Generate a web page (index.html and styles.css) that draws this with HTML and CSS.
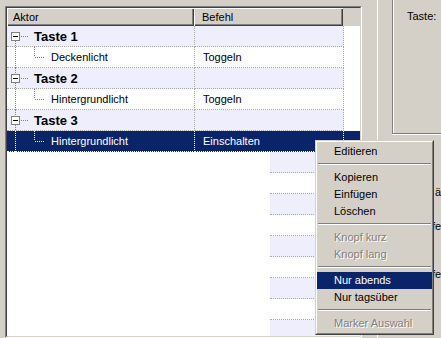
FILE: index.html
```html
<!DOCTYPE html>
<html lang="de">

<head>
    <meta charset="UTF-8">
    <meta name="viewport" content="width=device-width, initial-scale=1.0">
    <link rel="stylesheet" href="styles.css">
    <title>Aktor Liste</title>
</head>

<body>
    <div class="window">

        <div class="list">
            <div class="list-in">

                <div class="header">
                    <div class="hcell h1">Aktor</div>
                    <div class="hcell h2">Befehl</div>
                    <div class="hfill"></div>
                </div>

                <div class="row root">
                    <div class="cell c1">
                        <svg class="tree" width="27" height="20">
                            <path class="dot" d="M8.5 15V21"/>
                            <path class="dot" d="M14 10.5h8"/>
                            <rect x="4.5" y="6.5" width="8" height="8" fill="#fff" stroke="#808080"/>
                            <path d="M6 10.5h5" stroke="#000"/>
                        </svg>
                        <span class="key">Taste 1</span>
                    </div>
                    <div class="cell c2"></div>
                    <div class="cell fill"></div>
                </div>

                <div class="row">
                    <div class="cell c1">
                        <svg class="tree" width="44" height="20">
                            <path class="dot" d="M8.5 0V21"/>
                            <path class="dot" d="M27.5 0V10M28 10.5h9"/>
                        </svg>
                        <span>Deckenlicht</span>
                    </div>
                    <div class="cell c2">Toggeln</div>
                    <div class="cell fill"></div>
                </div>

                <div class="row root">
                    <div class="cell c1">
                        <svg class="tree" width="27" height="20">
                            <path class="dot" d="M8.5 0V6M8.5 15V21"/>
                            <path class="dot" d="M14 10.5h8"/>
                            <rect x="4.5" y="6.5" width="8" height="8" fill="#fff" stroke="#808080"/>
                            <path d="M6 10.5h5" stroke="#000"/>
                        </svg>
                        <span class="key">Taste 2</span>
                    </div>
                    <div class="cell c2"></div>
                    <div class="cell fill"></div>
                </div>

                <div class="row">
                    <div class="cell c1">
                        <svg class="tree" width="44" height="20">
                            <path class="dot" d="M8.5 0V21"/>
                            <path class="dot" d="M27.5 0V10M28 10.5h9"/>
                        </svg>
                        <span>Hintergrundlicht</span>
                    </div>
                    <div class="cell c2">Toggeln</div>
                    <div class="cell fill"></div>
                </div>

                <div class="row root">
                    <div class="cell c1">
                        <svg class="tree" width="27" height="20">
                            <path class="dot" d="M8.5 0V6M8.5 15V21"/>
                            <path class="dot" d="M14 10.5h8"/>
                            <rect x="4.5" y="6.5" width="8" height="8" fill="#fff" stroke="#808080"/>
                            <path d="M6 10.5h5" stroke="#000"/>
                        </svg>
                        <span class="key">Taste 3</span>
                    </div>
                    <div class="cell c2"></div>
                    <div class="cell fill"></div>
                </div>

                <div class="row sel">
                    <div class="cell c1">
                        <svg class="tree" width="44" height="20">
                            <path class="dot" d="M8.5 0V21"/>
                            <path class="dot" d="M27.5 0V10M28 10.5h9"/>
                        </svg>
                        <span>Hintergrundlicht</span>
                    </div>
                    <div class="cell c2">Einschalten</div>
                    <div class="cell fill"></div>
                </div>

                <!-- leftover rows that were not repainted -->
                <div class="ghost">
                    <div class="blank">
                        <div class="blank-top"></div>
                    </div>
                    <div class="stripes">
                        <div class="stripe"></div>
                        <div class="stripe"></div>
                        <div class="stripe"></div>
                        <div class="stripe"></div>
                        <div class="stripe"></div>
                        <div class="stripe"></div>
                        <div class="stripe"></div>
                        <div class="stripe"></div>
                        <div class="stripe"></div>
                    </div>
                </div>

            </div>
        </div>

        <div class="gap"></div>

        <div class="panel">
            <div class="group">
                <div class="group-label">Taste:</div>
            </div>
            <div class="label l1">ä</div>
            <div class="label l2">fe</div>
            <div class="label l3">fe</div>
        </div>

    </div>

    <div class="menu">
        <div class="menu-in">
            <div class="item">Editieren</div>
            <div class="sep"></div>
            <div class="item">Kopieren</div>
            <div class="item">Einfügen</div>
            <div class="item">Löschen</div>
            <div class="sep"></div>
            <div class="item off">Knopf kurz</div>
            <div class="item off">Knopf lang</div>
            <div class="sep"></div>
            <div class="item hot">Nur abends</div>
            <div class="item">Nur tagsüber</div>
            <div class="sep"></div>
            <div class="item off">Marker Auswahl</div>
        </div>
    </div>
</body>

</html>
```

FILE: styles.css
```css
html {
    box-sizing: border-box;
}

*,
*::before,
*::after {
    margin: 0;
    padding: 0;
    box-sizing: inherit;
}

body {
    position: relative;
    width: 441px;
    height: 338px;
    overflow: hidden;
    background-color: #d4d0c8;
    font-family: "Liberation Sans", Arial, sans-serif;
    font-size: 11px;
    color: #000;
}

.window {
    display: flex;
    height: 338px;
    overflow: hidden;
}

/* list view */

.list {
    flex: none;
    width: 357px;
    height: 332px;
    margin: 6px 0 0 5px;
    border: 1px solid;
    border-color: #808080 #fff #fff #808080;
}

.list-in {
    height: 100%;
    overflow: hidden;
    border: 1px solid;
    border-color: #404040 #d4d0c8 #d4d0c8 #404040;
    background-color: #fff;
}

.header {
    display: flex;
    height: 18px;
    background-color: #d4d0c8;
}

.hcell {
    line-height: 18px;
    box-shadow: inset 1px 1px #fff, inset -1px -1px #404040, inset -2px -2px #808080;
}

.h1 {
    width: 187px;
    padding-left: 6px;
}

.h2 {
    width: 149px;
    padding-left: 8px;
}

.hfill {
    flex: 1;
}

.row {
    display: flex;
    height: 21px;
}

.cell {
    display: flex;
    align-items: center;
    height: 21px;
    border-bottom: 1px dotted #a8a8a8;
    white-space: nowrap;
}

.c1 {
    width: 188px;
    border-right: 1px dotted #a8a8a8;
}

.c2 {
    width: 149px;
    padding-left: 8px;
    border-right: 1px dotted #a8a8a8;
}

.fill {
    flex: 1;
    border-bottom: none;
}

.tree {
    flex: none;
    overflow: visible;
}

.tree .dot {
    fill: none;
    stroke: #808080;
    stroke-dasharray: 1 1;
}

.key {
    font-size: 13px;
    font-weight: bold;
}

.root .c1,
.root .c2 {
    background-color: #eeeefc;
}

.sel .cell {
    background-color: #0a246a;
    color: #fff;
    border-color: #fff;
}

.sel .tree .dot {
    stroke: #fff;
}

.ghost {
    display: flex;
}

.blank {
    width: 263px;
    height: 186px;
    background-color: #eeeefc;
}

.blank-top {
    height: 184px;
    background-color: #fff;
}

.stripes {
    width: 90px;
}

.stripe {
    height: 21px;
    border-bottom: 1px dotted #a8a8a8;
}

.stripe:nth-child(odd) {
    background-color: #eeeefc;
}

/* right side */

.gap {
    flex: none;
    width: 15px;
}

.panel {
    flex: 1;
    border-left: 1px solid #fff;
}

.group {
    height: 134px;
    margin-left: 14px;
    padding: 10px 0 0 14px;
    border-left: 1px solid #808080;
    border-bottom: 1px solid #808080;
    box-shadow: inset 1px 0 #fff, 0 1px #fff;
}

.group-label {
    line-height: 13px;
}

.label {
    line-height: 13px;
    white-space: nowrap;
}

.l1 {
    margin-top: 52px;
    padding-left: 57px;
}

.l2 {
    margin-top: 21px;
    padding-left: 54px;
}

.l3 {
    margin-top: 35px;
    padding-left: 54px;
}

/* context menu */

.menu {
    position: absolute;
    left: 315px;
    top: 140px;
    width: 119px;
    border: 1px solid;
    border-color: #d4d0c8 #404040 #404040 #d4d0c8;
}

.menu-in {
    padding: 1px 0;
    border: 1px solid;
    border-color: #fff #808080 #808080 #fff;
    background-color: #d4d0c8;
}

.item {
    height: 17px;
    line-height: 17px;
    padding-left: 17px;
    white-space: nowrap;
}

.item.hot {
    background-color: #0a246a;
    color: #fff;
}

.item.off {
    color: #808080;
    text-shadow: 1px 1px #fff;
}

.sep {
    height: 2px;
    margin: 3px 1px 4px;
    border-top: 1px solid #808080;
    border-bottom: 1px solid #fff;
}
```
